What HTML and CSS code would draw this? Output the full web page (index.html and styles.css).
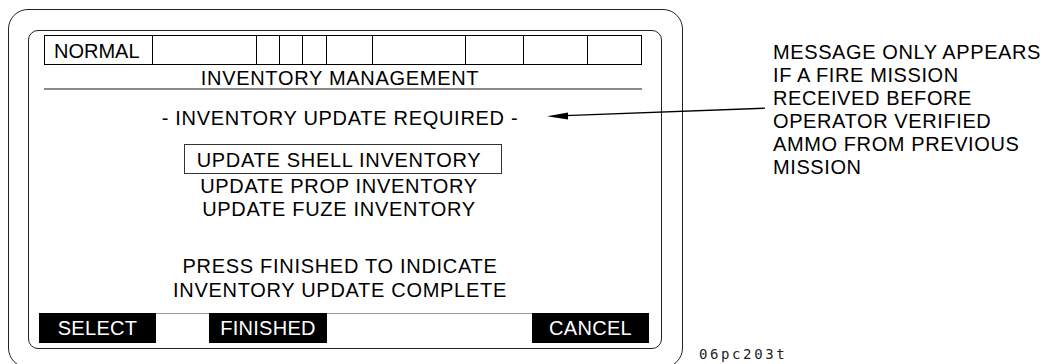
FILE: index.html
```html
<!DOCTYPE html>
<html>
<head>
<meta charset="utf-8">
<link rel="stylesheet" href="styles.css">
</head>
<body>
<div class="page">
  <div class="device">
    <div class="screen">
      <div class="status">
        <div class="cell c1">NORMAL</div>
        <div class="cell"></div>
        <div class="cell"></div>
        <div class="cell"></div>
        <div class="cell"></div>
        <div class="cell"></div>
        <div class="cell"></div>
        <div class="cell"></div>
        <div class="cell"></div>
        <div class="cell last"></div>
      </div>
      <div class="title">INVENTORY MANAGEMENT</div>
      <div class="required">- INVENTORY UPDATE REQUIRED -</div>
      <div class="options">
        <div class="opt selected">UPDATE SHELL INVENTORY</div>
        <div class="opt">UPDATE PROP INVENTORY</div>
        <div class="opt">UPDATE FUZE INVENTORY</div>
      </div>
      <div class="note">PRESS FINISHED TO INDICATE<br>INVENTORY UPDATE COMPLETE</div>
      <div class="keys">
        <div class="key">SELECT</div>
        <div class="key k2">FINISHED</div>
        <div class="key k3">CANCEL</div>
      </div>
    </div>
  </div>
  <div class="side">
    <div class="annot">MESSAGE ONLY APPEARS<br>IF A FIRE MISSION<br>RECEIVED BEFORE<br>OPERATOR VERIFIED<br>AMMO FROM PREVIOUS<br>MISSION</div>
    <div class="code">06pc203t</div>
  </div>
  <svg class="arrow" width="1052" height="364" viewBox="0 0 1052 364">
    <line x1="565" y1="115.6" x2="765" y2="108.2" stroke="#000" stroke-width="1.3"/>
    <polygon points="547,116.3 568,112.6 568,119.4" fill="#000"/>
  </svg>
</div>
</body>
</html>
```

FILE: styles.css
```css
html, body {
  margin: 0;
  padding: 0;
  background: #fff;
  overflow: hidden;
}
body {
  width: 1052px;
  height: 364px;
  font-family: "Liberation Sans", Arial, sans-serif;
  color: #000;
}
.page {
  position: relative;
  display: flex;
  align-items: flex-start;
  width: 1052px;
  height: 364px;
}
.device {
  box-sizing: border-box;
  margin: 9px 0 0 8px;
  width: 675px;
  height: 359px;
  border: 1px solid #222;
  border-radius: 20px;
  padding: 20px 0 0 19px;
  flex: none;
}
.screen {
  box-sizing: border-box;
  width: 634px;
  height: 319px;
  border: 1px solid #222;
  border-radius: 10px;
  display: flex;
  flex-direction: column;
  font-size: 20px;
  letter-spacing: 0.7px;
}
.status {
  box-sizing: border-box;
  margin: 4px 0 0 15px;
  width: 598px;
  height: 30px;
  border: 1px solid #000;
  display: grid;
  grid-template-columns: 108px 104px 23px 23px 24px 46px 93px 58px 64px 53px;
}
.cell {
  box-sizing: border-box;
  border-right: 1px solid #000;
}
.cell.last { border-right: none; }
.c1 {
  padding: 3px 0 0 9px;
  line-height: 25px;
  letter-spacing: 0;
}
.title {
  box-sizing: border-box;
  margin-left: 15px;
  width: 598px;
  padding: 3px 6px 0 0;
  line-height: 20px;
  text-align: center;
  border-bottom: 2px solid #8a8a8a;
}
.required {
  margin: 16px 0 0 15px;
  width: 592px;
  line-height: 24px;
  text-align: center;
}
.options {
  margin: 14px 0 0 155px;
  width: 318px;
}
.opt {
  padding-right: 8px;
  line-height: 23px;
  text-align: center;
}
.opt.selected {
  box-sizing: border-box;
  border: 1px solid #333;
  padding-top: 3px;
  line-height: 25px;
  height: 30px;
  margin-bottom: 1px;
}
.note {
  margin: 34px 0 0 15px;
  width: 592px;
  line-height: 23.5px;
  text-align: center;
}
.keys {
  margin: 11px 0 0 10px;
  width: 610px;
  height: 30px;
  display: flex;
  background: linear-gradient(#9a9a9a, #9a9a9a) top left / 100% 1px no-repeat;
}
.key {
  width: 117px;
  height: 30px;
  background: #000;
  color: #fff;
  text-align: center;
  line-height: 30px;
  letter-spacing: 0.3px;
}
.k2 { margin-left: 53px; width: 118px; }
.k3 { margin-left: auto; }
.side {
  margin-left: 16px;
  display: flex;
  flex-direction: column;
}
.annot {
  margin-top: 41px;
  padding-left: 74px;
  font-size: 20px;
  line-height: 23px;
  letter-spacing: 0.6px;
  white-space: nowrap;
}
.code {
  margin-top: 167px;
  font-family: "DejaVu Sans Mono", monospace;
  font-size: 14px;
  line-height: 16px;
  letter-spacing: 2.6px;
  color: #222;
}
.arrow {
  position: absolute;
  left: 0;
  top: 0;
  pointer-events: none;
}
```
